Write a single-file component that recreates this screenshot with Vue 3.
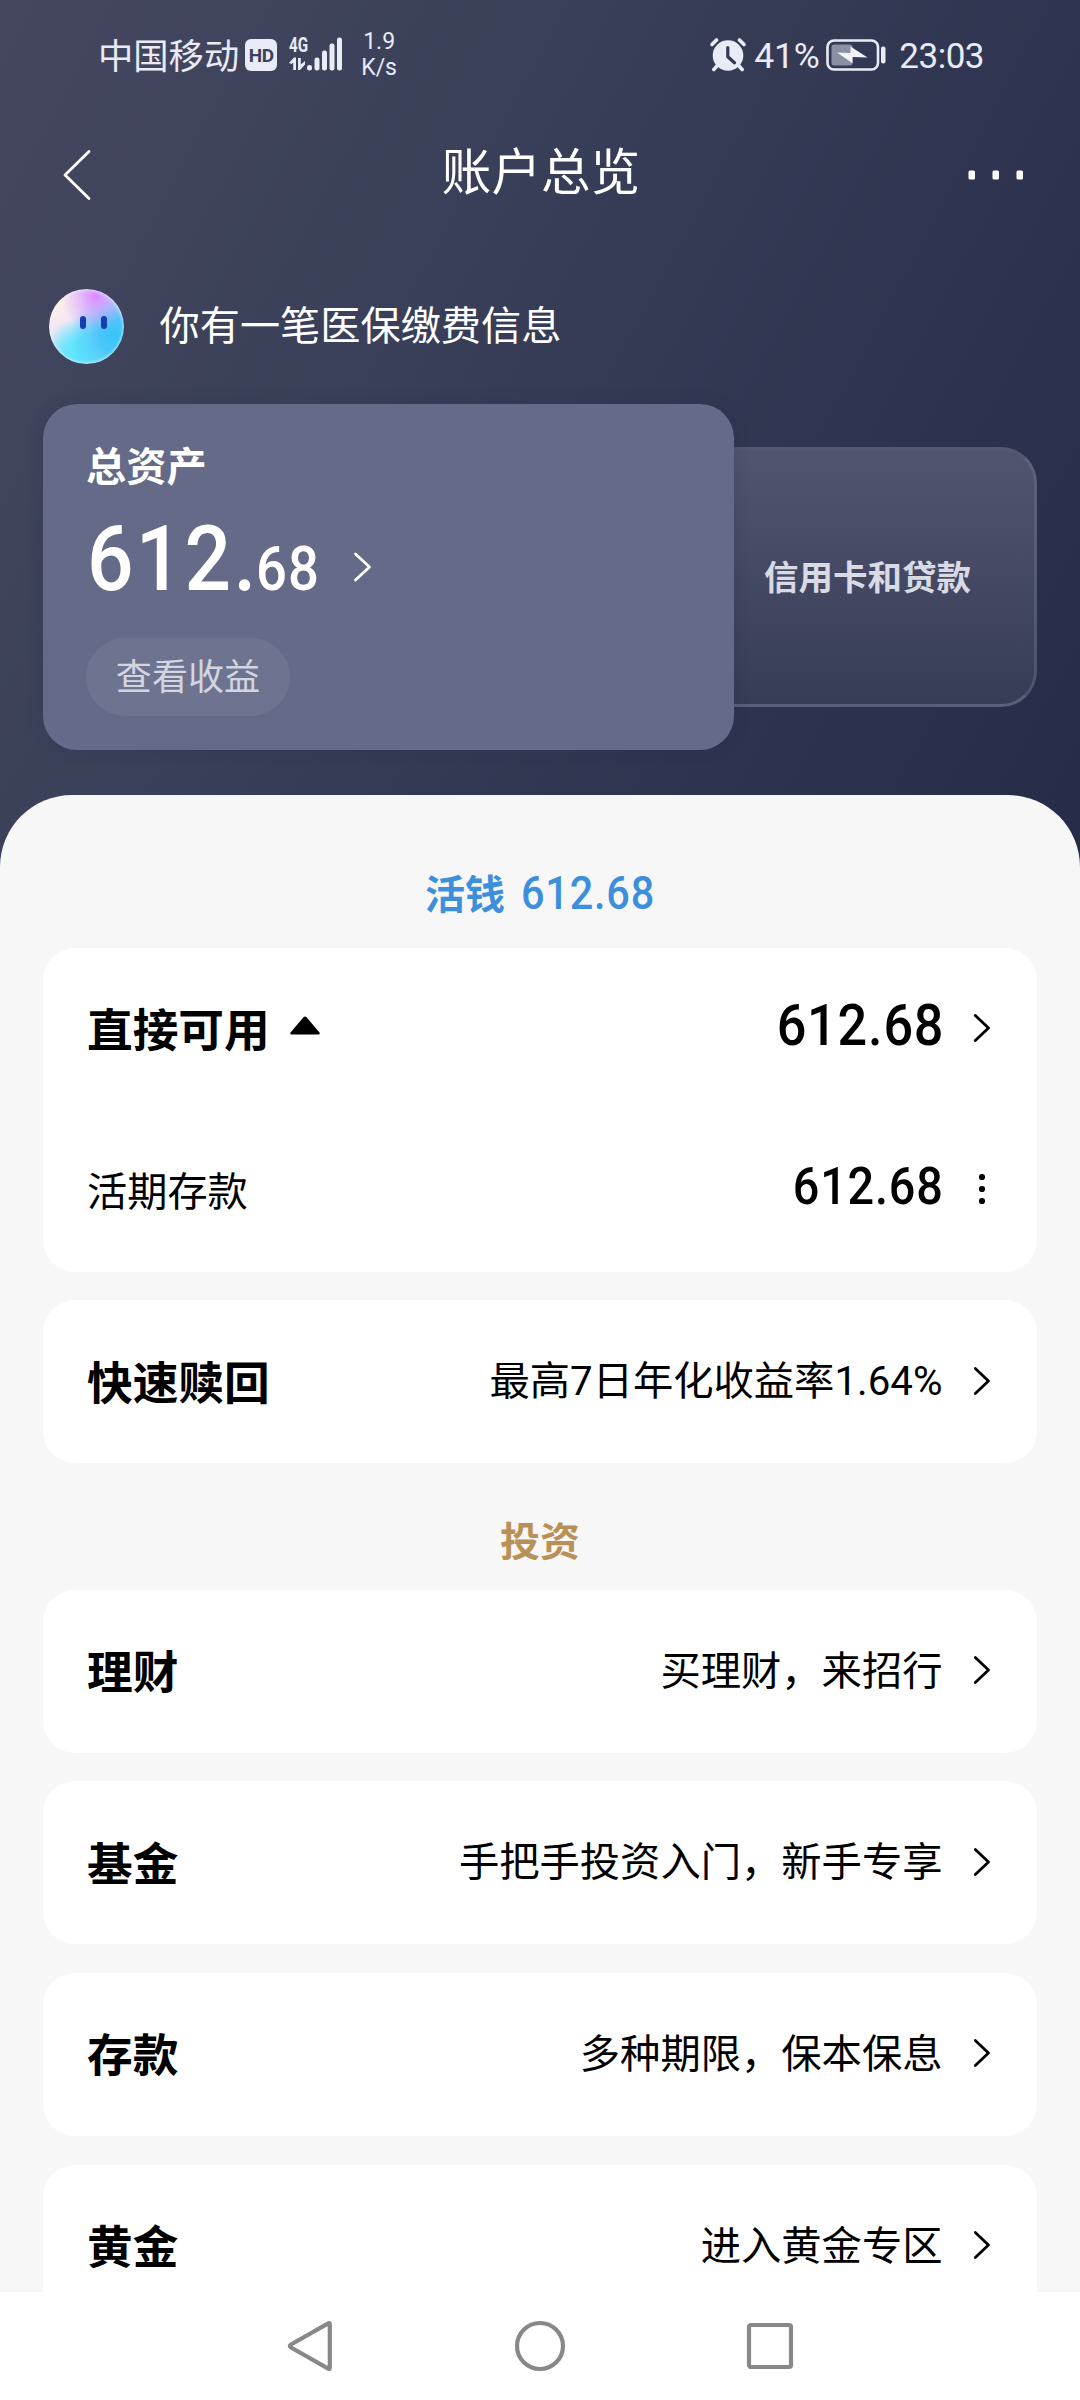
<script setup>
const available = {
  title: '直接可用',
  amount: '612.68',
  detail: { title: '活期存款', amount: '612.68' },
}
const redeem = [{ title: '快速赎回', note: '最高7日年化收益率1.64%' }]
const invest = [
  { title: '理财', note: '买理财，来招行' },
  { title: '基金', note: '手把手投资入门，新手专享' },
  { title: '存款', note: '多种期限，保本保息' },
  { title: '黄金', note: '进入黄金专区' },
]
</script>

<template>
  <div class="screen">
    <header class="hero">
      <div class="status">
        <div class="status-left">
          <span class="carrier">中国移动</span>
          <span class="hd">HD</span>
          <div class="signal">
            <span class="net">4G</span>
            <svg width="54" height="34" viewBox="0 0 54 34">
              <g fill="#e9ebf6">
                <path d="M0 26l5-5.500h2V33H4.200V25.500L2.500 27z" />
                <path d="M9 21h2.800v6.500L16 24v3.500L11 33H9z" />
                <rect x="18" y="28" width="5" height="5.500" rx="2.200" />
                <rect x="25.500" y="20.500" width="5" height="13" rx="2.200" />
                <rect x="33" y="13.500" width="5" height="20" rx="2.200" />
                <rect x="40.500" y="6.500" width="5" height="27" rx="2.200" />
                <rect x="48" y="0.500" width="5" height="33" rx="2.200" />
              </g>
            </svg>
          </div>
          <div class="speed"><span>1.9</span><span>K/s</span></div>
        </div>
        <div class="status-right">
          <svg class="alarm" width="36" height="34" viewBox="0 0 36 34">
            <circle cx="18" cy="17.500" r="15.300" fill="#e9ebf6" />
            <path d="M0 10L10 0M36 10L26 0" stroke="#373d56" stroke-width="3" />
            <path d="M2 6.500l4.500-4.500M34 6.500l-4.500-4.500M6.500 28.500L3.800 31.500M29.500 28.500l2.700 3" stroke="#e9ebf6" stroke-width="3.600" stroke-linecap="round" />
            <path d="M17.800 9.500v9.300l6.700 6" fill="none" stroke="#333953" stroke-width="3.200" stroke-linecap="round" stroke-linejoin="round" />
          </svg>
          <span class="percent">41%</span>
          <svg class="battery" width="60" height="34" viewBox="0 0 60 34">
            <rect x="1.500" y="2.500" width="50.500" height="29" rx="6.500" fill="none" stroke="#e9ebf6" stroke-width="2.600" />
            <rect x="5.500" y="6.500" width="21" height="21" rx="2.500" fill="#8b8fa3" />
            <path d="M11 14.500l13.500.500V8.500L41.500 19.500l-15-.500v6.300z" fill="#f1f3fb" />
            <rect x="55" y="8.500" width="4.500" height="17" rx="2" fill="#e9ebf6" />
          </svg>
          <span class="clock">23:03</span>
        </div>
      </div>

      <nav class="navbar">
        <svg width="30" height="52" viewBox="0 0 30 52">
          <path d="M27 2.500L3 26l24 23.500" fill="none" stroke="#fff" stroke-width="2.800" stroke-linecap="round" stroke-linejoin="round" />
        </svg>
        <h1>账户总览</h1>
        <svg width="56" height="10" viewBox="0 0 56 10" fill="#fff">
          <rect x="0.500" y="0.500" width="6.500" height="9" rx="1.500" />
          <rect x="24.500" y="0.500" width="6.500" height="9" rx="1.500" />
          <rect x="48.500" y="0.500" width="6.500" height="9" rx="1.500" />
        </svg>
      </nav>

      <div class="notice">
        <div class="avatar"><i></i><i></i></div>
        <span>你有一笔医保缴费信息</span>
      </div>

      <div class="cards">
        <section class="total">
          <div class="total-label">总资产</div>
          <div class="total-row">
            <span class="total-amount"><b>612.</b><small>68</small></span>
            <svg width="20" height="32" viewBox="0 0 20 32">
              <path d="M2.500 3l14 13-14 13" fill="none" stroke="#fff" stroke-width="2.800" stroke-linecap="round" stroke-linejoin="round" />
            </svg>
          </div>
          <div class="pill">查看收益</div>
        </section>
        <section class="credit">信用卡和贷款</section>
      </div>
    </header>

    <main class="sheet">
      <div class="section live"><span>活钱</span><span class="live-amount">612.68</span></div>
      <div class="card">
        <div class="row first">
          <span class="title">{{ available.title }}</span>
          <svg class="caret" width="30" height="19" viewBox="0 0 30 19">
            <path d="M13.700 1q1.300-1.200 2.600 0L29.500 16.500q.8 2-1 2h-27q-1.800 0-1-2z" />
          </svg>
          <span class="amount large">{{ available.amount }}</span>
          <svg class="chev" width="18" height="30" viewBox="0 0 18 30">
            <path d="M2.300 2.500L15.500 15 2.300 27.500" />
          </svg>
        </div>
        <div class="row second">
          <span class="subtitle">{{ available.detail.title }}</span>
          <span class="amount">{{ available.detail.amount }}</span>
          <svg class="more" width="18" height="32" viewBox="0 0 18 32">
            <circle cx="9" cy="4" r="3.100" /><circle cx="9" cy="16" r="3.100" /><circle cx="9" cy="28" r="3.100" />
          </svg>
        </div>
      </div>

      <div v-for="item in redeem" :key="item.title" class="card row">
        <span class="title">{{ item.title }}</span>
        <span class="note">{{ item.note }}</span>
        <svg class="chev" width="18" height="30" viewBox="0 0 18 30">
          <path d="M2.300 2.500L15.500 15 2.300 27.500" />
        </svg>
      </div>

      <div class="section invest">投资</div>
      <div v-for="item in invest" :key="item.title" class="card row">
        <span class="title">{{ item.title }}</span>
        <span class="note">{{ item.note }}</span>
        <svg class="chev" width="18" height="30" viewBox="0 0 18 30">
          <path d="M2.300 2.500L15.500 15 2.300 27.500" />
        </svg>
      </div>
    </main>

    <footer class="keys">
      <svg width="52" height="54" viewBox="0 0 52 54">
        <path d="M44.800 5.500v43q0 2.500-2 .800L6 28.500q-2.300-1.500 0-3L42.800 4.700q2-1.700 2 .8z" />
      </svg>
      <svg width="54" height="54" viewBox="0 0 54 54"><circle cx="27" cy="27" r="23" /></svg>
      <svg width="54" height="54" viewBox="0 0 54 54"><rect x="6" y="6" width="42" height="42" rx="2" /></svg>
    </footer>
  </div>
</template>

<style>
body {
  margin: 0;
  background: #f7f7f8;
}
</style>

<style scoped>
.screen {
  width: 1080px;
  height: 2400px;
  overflow: hidden;
  display: flex;
  flex-direction: column;
  font-family: Roboto, "Noto Sans CJK SC", sans-serif;
  background: linear-gradient(118deg, #45475f 0, #3a4059 480px, #2f3550 950px, #262c47 1370px) no-repeat;
  background-size: 1080px 900px;
  color: #000;
}
svg {
  display: block;
  flex: none;
}
.hero {
  height: 795px;
  flex: none;
}
.status {
  height: 110px;
  display: flex;
  justify-content: space-between;
  padding: 0 96px 0 98px;
  color: #e9ebf6;
}
.status-left,
.status-right {
  display: flex;
  align-items: center;
}
.carrier {
  font-size: 35.3px;
  line-height: 50px;
  margin-top: 4px;
}
.hd {
  width: 32px;
  height: 32px;
  margin-left: 6px;
  border-radius: 6px;
  background: #e9ebf6;
  color: #3b4059;
  font-size: 19px;
  font-weight: 700;
  line-height: 33px;
  text-align: center;
  letter-spacing: -0.5px;
}
.signal {
  position: relative;
  margin-left: 12px;
  margin-top: -2px;
}
.net {
  position: absolute;
  left: 0;
  top: 0;
  font-size: 20px;
  font-weight: 700;
  line-height: 16px;
  transform: scaleX(0.76);
  transform-origin: left;
}
.speed {
  margin-left: 18px;
  display: flex;
  flex-direction: column;
  align-items: center;
  font-size: 23px;
  line-height: 26.500px;
}
.percent {
  font-size: 35.500px;
  width: 64px;
  margin-left: 8px;
  margin-top: 2px;
  letter-spacing: -0.3px;
}
.battery {
  margin-left: 8px;
}
.clock {
  font-size: 35px;
  margin-left: 13px;
  margin-top: 2px;
  letter-spacing: -0.5px;
}
.navbar {
  height: 130px;
  display: flex;
  align-items: center;
  justify-content: space-between;
  padding: 0 56px 0 62px;
}
h1 {
  margin: -4px 0 0 22px;
  font-size: 49.600px;
  line-height: 70px;
  font-weight: 400;
  color: #fff;
}
.notice {
  height: 164px;
  display: flex;
  align-items: center;
  padding: 9px 0 0 48.500px;
  box-sizing: border-box;
  color: #fff;
  font-size: 40.200px;
  line-height: 60px;
}
.avatar {
  width: 75px;
  height: 75px;
  border-radius: 50%;
  margin-right: 36px;
  display: flex;
  justify-content: center;
  gap: 15px;
  padding: 27px 0 0 15px;
  box-sizing: border-box;
  background:
    radial-gradient(circle at 62% 10%, #d98aff 0, #d59bff99 18%, #d59bff00 42%),
    radial-gradient(circle at 88% 62%, #35c4f8 0, #4cc6fa 20%, #58cffa00 55%),
    radial-gradient(circle at 42% 88%, #58e4fb 0, #6ae6fb 20%, #7ae4ff00 48%),
    linear-gradient(140deg, #fff0e4 12%, #f3e6f6 36%, #b9dcfa 60%, #6fe6fb 100%);
  box-shadow: inset 0 0 3px 1px #e8f6ffb0;
}
.avatar i {
  width: 6px;
  height: 13px;
  border-radius: 3px;
  background: #153fae;
}
.cards {
  display: flex;
  align-items: center;
  padding-left: 43px;
  height: 346px;
}
.total {
  position: relative;
  width: 691px;
  height: 346px;
  border-radius: 34px;
  box-sizing: border-box;
  padding: 34px 0 0 43px;
  background: #646a88;
  color: #fff;
  z-index: 1;
  box-shadow: 0 0 16px #20254130;
}
.total-label {
  font-size: 40.200px;
  line-height: 60px;
  font-weight: 700;
}
.total-row {
  display: flex;
  align-items: center;
  height: 100px;
  margin-top: 24px;
}
.total-amount {
  width: 266px;
  padding-left: 1px;
  line-height: 100px;
  white-space: nowrap;
}
.total-amount b,
.total-amount small {
  display: inline-block;
  font-weight: 500;
  transform: scaleX(0.9);
  transform-origin: left;
}
.total-amount b {
  width: 169px;
  font-size: 91px;
  letter-spacing: 2.500px;
}
.total-amount small {
  font-size: 60.500px;
  letter-spacing: 1.200px;
}
.total-row svg {
  margin-top: -10px;
}
.pill {
  width: 204px;
  height: 78px;
  margin-top: 16px;
  border-radius: 39px;
  background: #6e7490;
  color: #d3d5e0;
  font-size: 36.100px;
  line-height: 81px;
  text-align: center;
}
.credit {
  width: 343px;
  height: 260px;
  margin-left: -40px;
  padding-left: 67px;
  box-sizing: border-box;
  border: 3px solid #7b809a55;
  border-top-color: #6d708822;
  border-bottom-color: #7b809a88;
  border-radius: 36px;
  background: linear-gradient(#52556f, #474b66 40%, #373c56) border-box;
  color: #d8dae4;
  font-size: 34.500px;
  font-weight: 700;
  line-height: 257px;
}
.sheet {
  flex: 1;
  min-height: 0;
  overflow: hidden;
  box-sizing: border-box;
  padding: 0 43px;
  border-radius: 72px 72px 0 0;
  background: #f7f7f8;
}
.section {
  display: flex;
  justify-content: center;
  align-items: center;
  font-size: 40px;
  font-weight: 700;
}
.live {
  height: 152.500px;
  padding-top: 42px;
  box-sizing: border-box;
  color: #3e8fdb;
}
.live-amount {
  margin-left: 16px;
  margin-top: 1px;
  width: 134px;
  font-size: 46px;
  font-weight: 500;
  letter-spacing: 0.900px;
  transform: scaleX(0.9);
  transform-origin: left;
}
.invest {
  height: 126.500px;
  box-sizing: border-box;
  margin-top: -28.670px;
  padding-top: 26px;
  color: #b99157;
}
.card {
  margin-bottom: 28.670px;
  border-radius: 32px;
  background: #fff;
}
.row {
  height: 163px;
  display: flex;
  align-items: center;
  padding: 0 46px 0 44px;
  box-sizing: border-box;
}
.first,
.second {
  height: 162px;
}
.title {
  font-size: 45.700px;
  line-height: 66px;
  font-weight: 700;
  margin-top: 6px;
}
.subtitle {
  font-size: 40.200px;
  line-height: 60px;
  margin-top: 5px;
}
.caret {
  margin: -7px 0 0 20px;
}
.note {
  margin-left: auto;
  margin-top: 1px;
  font-size: 40.300px;
  line-height: 60px;
}
.chev {
  margin-left: 30.500px;
  margin-top: -2px;
}
.chev path {
  fill: none;
  stroke: #000;
  stroke-width: 2.800;
  stroke-linecap: round;
  stroke-linejoin: round;
}
.amount {
  margin-left: auto;
  font-size: 52px;
  line-height: 60px;
  font-weight: 500;
  letter-spacing: 0.900px;
  margin-right: -1.500px;
  margin-top: -8px;
  transform: scaleX(0.9);
  transform-origin: right;
}
.amount.large {
  font-size: 58px;
}
.more {
  margin-left: 31px;
  margin-top: -3px;
}
.keys {
  flex: none;
  height: 108px;
  display: flex;
  justify-content: space-between;
  align-items: center;
  padding: 0 283.500px 0 284.500px;
  background: #fff;
}
.keys svg {
  fill: none;
  stroke: #888;
  stroke-width: 4.200;
  stroke-linejoin: round;
}
</style>
